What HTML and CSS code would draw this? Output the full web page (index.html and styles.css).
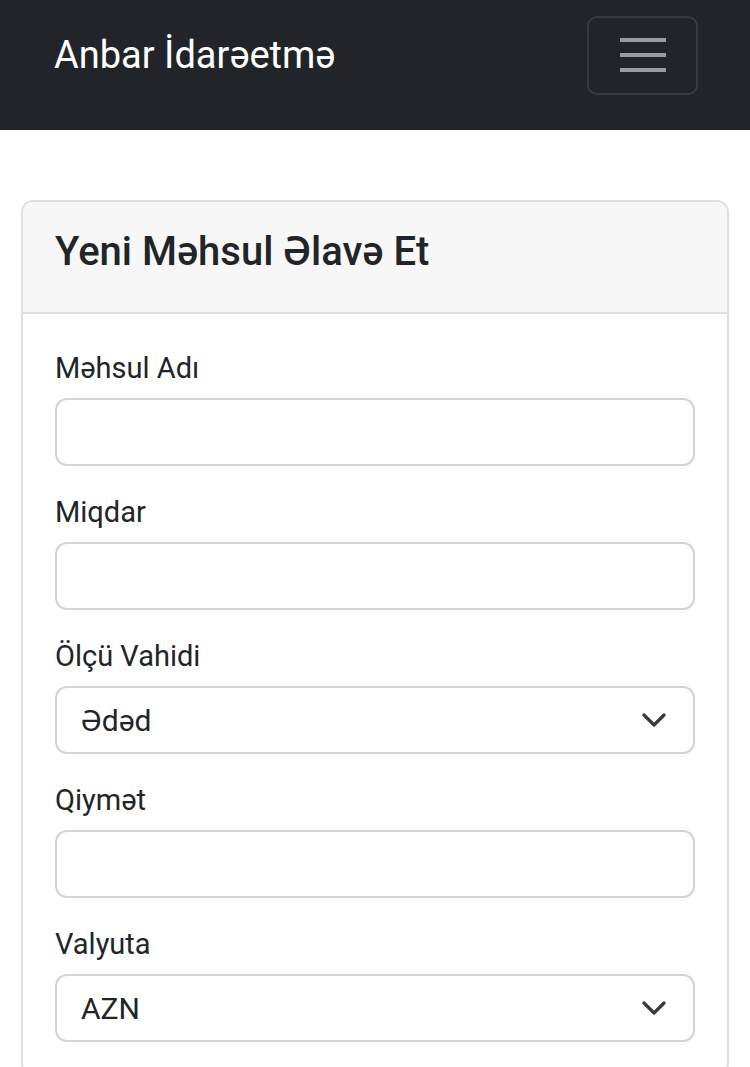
FILE: index.html
```html
<!DOCTYPE html>
<html lang="az">
<head>
    <meta charset="UTF-8">
    <meta name="viewport" content="width=device-width, initial-scale=1.0">
    <title>Anbar İdarəetmə</title>
    <link rel="stylesheet" href="styles.css">
</head>
<body>

<!-- Navbar -->
<nav class="navbar">
    <a class="brand" href="#">Anbar İdarəetmə</a>
    <button class="toggler" type="button" aria-label="Menyu">
        <svg width="46" height="34" viewBox="0 0 46 34">
            <path d="M0 2H46M0 17H46M0 32H46" stroke="rgba(255,255,255,0.55)" stroke-width="4" stroke-linecap="round"/>
        </svg>
    </button>
</nav>

<!-- Məhsul formu -->
<div class="container">
    <div class="card">
        <div class="card-header">
            <h4>Yeni Məhsul Əlavə Et</h4>
        </div>
        <div class="card-body">
            <form>
                <div class="field">
                    <label for="name">Məhsul Adı</label>
                    <input type="text" id="name" class="control">
                </div>
                <div class="field">
                    <label for="qty">Miqdar</label>
                    <input type="text" id="qty" class="control">
                </div>
                <div class="field">
                    <label for="unit">Ölçü Vahidi</label>
                    <div class="select-wrap">
                        <select id="unit" class="control">
                            <option>Ədəd</option>
                            <option>Kq</option>
                            <option>Litr</option>
                        </select>
                        <svg class="chevron" width="24" height="14" viewBox="0 0 24 14">
                            <path d="M2 2L12 12L22 2" fill="none" stroke="#343a40" stroke-width="3.2" stroke-linecap="round" stroke-linejoin="round"/>
                        </svg>
                    </div>
                </div>
                <div class="field">
                    <label for="price">Qiymət</label>
                    <input type="text" id="price" class="control">
                </div>
                <div class="field">
                    <label for="currency">Valyuta</label>
                    <div class="select-wrap">
                        <select id="currency" class="control">
                            <option>AZN</option>
                            <option>USD</option>
                            <option>EUR</option>
                        </select>
                        <svg class="chevron" width="24" height="14" viewBox="0 0 24 14">
                            <path d="M2 2L12 12L22 2" fill="none" stroke="#343a40" stroke-width="3.2" stroke-linecap="round" stroke-linejoin="round"/>
                        </svg>
                    </div>
                </div>
            </form>
        </div>
    </div>
</div>

</body>
</html>
```

FILE: styles.css
```css
body {
    margin: 0;
    font-family: Roboto, "Liberation Sans", sans-serif;
    color: #212529;
    background-color: #fff;
}

/* Navbar */
.navbar {
    background-color: #212529;
    height: 130px;
    box-sizing: border-box;
    padding: 16px 52px 36px 54px;
    display: flex;
    align-items: center;
    justify-content: space-between;
}

.brand {
    color: #fff;
    text-decoration: none;
    font-size: 38px;
    line-height: 1;
}

.toggler {
    width: 111px;
    height: 79px;
    background: none;
    border: 2px solid rgba(255, 255, 255, 0.1);
    border-radius: 10px;
    display: flex;
    align-items: center;
    justify-content: center;
    padding: 0;
}

/* Card */
.container {
    padding: 70px 21px 40px 21px;
}

.card {
    border: 2px solid #dfdfdf;
    border-radius: 12px;
    overflow: hidden;
}

.card-header {
    background-color: #f7f7f7;
    border-bottom: 2px solid #dfdfdf;
    height: 112px;
    box-sizing: border-box;
    padding: 0 32px;
    display: flex;
    align-items: center;
}

.card-header h4 {
    margin: 0;
    font-size: 40px;
    font-weight: 500;
    line-height: 1.2;
    position: relative;
    top: -5px;
}

.card-body {
    padding: 32px 32px 8px 32px;
}

.field {
    margin-bottom: 24px;
}

.field label {
    display: block;
    font-size: 29px;
    line-height: 44px;
    margin-bottom: 8px;
}

.control {
    display: block;
    width: 100%;
    height: 68px;
    box-sizing: border-box;
    border: 2px solid #d3d4d8;
    border-radius: 12px;
    background-color: #fff;
    padding: 0 24px;
    font-family: inherit;
    font-size: 30px;
    color: #212529;
    outline: none;
}

.select-wrap {
    position: relative;
}

select.control {
    appearance: none;
    -webkit-appearance: none;
}

.chevron {
    position: absolute;
    right: 29px;
    top: 27px;
    pointer-events: none;
}
```
